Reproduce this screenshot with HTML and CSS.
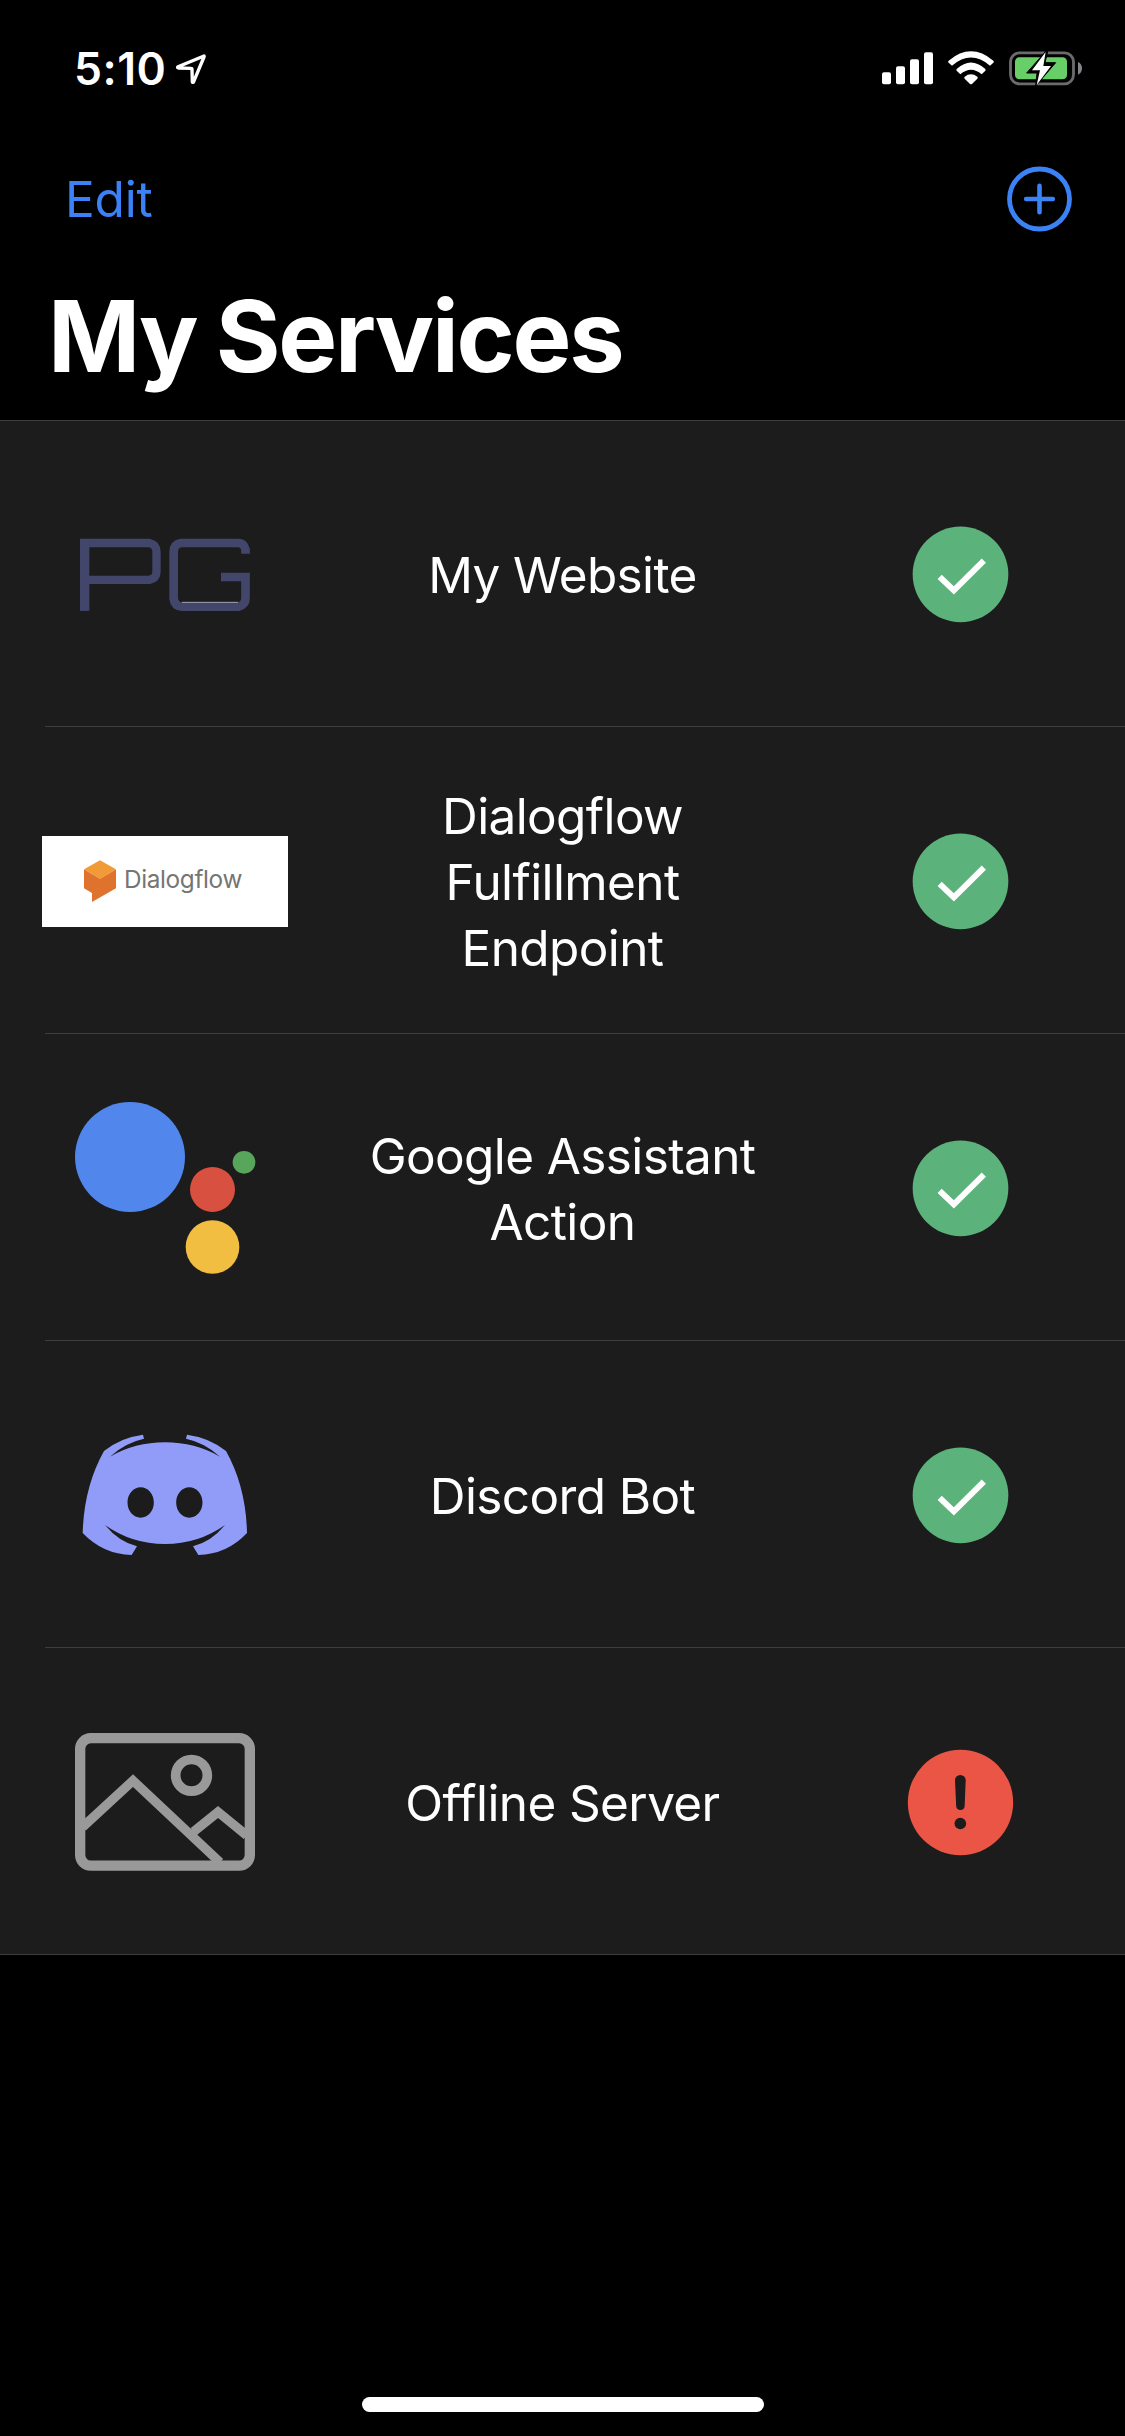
FILE: index.html
```html
<!DOCTYPE html>
<html lang="en">
<head>
<meta charset="utf-8">
<title>My Services</title>
<link rel="stylesheet" href="styles.css">
</head>
<body>
<svg class="defs" aria-hidden="true">
  <symbol id="ok" viewBox="0 0 480 441">
    <circle cx="241.500" cy="223" r="143.500" fill="#5bb27b"/>
    <path d="M179 230.500 221.500 271 311.500 182" fill="none" stroke="#fff" stroke-width="18"/>
  </symbol>
</svg>
<div class="screen">
  <header class="status-bar">
    <div class="clock">
      <span class="time">5:10</span>
      <svg class="location" width="30" height="30" viewBox="0 0 90 90"><path d="M84 6 6 38.500Q3 41 7 42L46 43Q48 43 48 46L49 84Q51 87 53 83L84 9Q85 6 84 6Z" fill="none" stroke="#fff" stroke-width="10" stroke-linejoin="round"/></svg>
    </div>
    <div class="indicators">
      <svg width="51" height="36" viewBox="0 0 153 108" fill="#fff"><rect x="0" y="67" width="27" height="36" rx="6"/><rect x="42" y="49" width="27" height="54" rx="6"/><rect x="84" y="28" width="27" height="75" rx="6"/><rect x="126" y="7" width="27" height="96" rx="6"/></svg>
      <svg width="46" height="36" viewBox="0 0 138 108" fill="#fff">
        <path d="M2 32Q-1 35 2 38L12 47Q69-2 126 47L136 38Q139 35 136 32Q69-24 2 32Z"/>
        <path d="M26 57Q24 60 26 62L37 73Q69 46 101 73L112 62Q114 60 112 57Q69 18 26 57Z"/>
        <path d="M50 80Q47 83 50 86L66 102Q69 104 72 102L88 86Q91 83 88 80Q69 66 50 80Z"/>
      </svg>
      <svg width="74" height="36" viewBox="0 0 222 108">
        <rect x="4.500" y="8.500" width="189" height="93" rx="27" fill="none" stroke="#6b6b6d" stroke-width="8.500"/>
        <path d="M207 36Q219 41 219 55T207 74Z" fill="#868688"/>
        <rect x="18" y="22" width="156" height="66" rx="13" fill="#68ce67"/>
        <path d="M112 2 53 69H84L80 108 140 38H108L116 4Z" fill="#000" stroke="#000" stroke-width="3"/>
        <path d="M110 6 69 61H93L83 105 126 48H103Z" fill="#fff"/>
      </svg>
    </div>
  </header>
  <nav class="nav-bar">
    <a class="edit">Edit</a>
    <svg width="67" height="66" viewBox="0 0 67 66" fill="none" stroke="#3b82f7"><circle cx="34.500" cy="33" r="30" stroke-width="4.800"/><path d="M34.500 19.700v26.600M21.200 33h26.600" stroke-width="4.600" stroke-linecap="round"/></svg>
  </nav>
  <h1 class="title">My Services</h1>
  <main class="services">
    <section class="service">
      <svg class="logo" width="270" height="127" viewBox="0 0 810 381" fill="none" stroke="#43466b">
        <path d="M163.500 302V99H358Q379.500 104 379.500 125V185Q379.500 205 358 209.500H177" stroke-width="25"/>
        <path d="M150 87H178V302H150Z" fill="#43466b" stroke="none"/>
        <path d="M646.500 131V118Q641 99 625 99H453Q431 103 431 125V266Q434 289 455 290H625Q646.500 285 646.500 265V201H573" stroke-width="26"/>
        <path d="M456 277H624" stroke="#a3a3ae" stroke-width="3"/>
      </svg>
      <h2 class="name">My Website</h2>
      <svg class="state" width="160" height="147"><use href="#ok"/></svg>
    </section>
    <section class="service">
      <svg class="logo" width="270" height="121" viewBox="0 0 810 363">
        <path d="M36 48H774V321H36Z" fill="#fff"/>
        <path d="M162 148 210 176 258 148V205L186 246V219L162 205Z" fill="#df732d"/>
        <path d="M210 121 258 148 210 177 162 148Z" fill="#f09b38"/>
        <text class="wordmark" x="282" y="205" textLength="355">Dialogflow</text>
      </svg>
      <h2 class="name">Dialogflow Fulfillment Endpoint</h2>
      <svg class="state" width="160" height="147"><use href="#ok"/></svg>
    </section>
    <section class="service">
      <svg class="logo" width="210" height="215" viewBox="0 0 630 645">
        <circle cx="210" cy="231" r="165" fill="#5186ed"/>
        <circle cx="457.500" cy="328.500" r="67.500" fill="#d85140"/>
        <circle cx="457.500" cy="501" r="80.500" fill="#f1be42"/>
        <circle cx="552" cy="247" r="34" fill="#58a55c"/>
      </svg>
      <h2 class="name">Google Assistant Action</h2>
      <svg class="state" width="160" height="147"><use href="#ok"/></svg>
    </section>
    <section class="service">
      <svg class="logo" width="210" height="169" viewBox="0 0 630 507">
        <path fill="#919cf8" fill-rule="evenodd" d="M249 74 252 86Q195 98 150 140Q225 97 315 97T480 140Q435 98 378 86L381 74Q449 83 498 123Q558 230 561 369Q501 433 415 435L399 409Q454 395 495 345Q415 402 315 402T135 345Q176 395 231 409L215 435Q129 433 68 369Q72 230 132 123Q181 83 249 74ZM242 232C220 232 202.500 252 202.500 277.500S220 323 242 323 281.500 303 281.500 277.500 264 232 242 232ZM388 232C366 232 348.500 252 348.500 277.500S366 323 388 323 427.500 303 427.500 277.500 410 232 388 232Z"/>
      </svg>
      <h2 class="name">Discord Bot</h2>
      <svg class="state" width="160" height="147"><use href="#ok"/></svg>
    </section>
    <section class="service">
      <svg class="logo" width="210" height="183" viewBox="0 0 630 549" fill="none" stroke="#999">
        <rect x="60.500" y="84.500" width="509" height="382.500" rx="32" stroke-width="31"/>
        <circle cx="394.500" cy="196" r="47.500" stroke-width="29"/>
        <path d="M68 351 219 212 480 457M401 365 474 306 560 376" stroke-width="28"/>
      </svg>
      <h2 class="name">Offline Server</h2>
      <svg class="state" width="160" height="143" viewBox="0 0 480 429">
        <circle cx="241.500" cy="217.500" r="158" fill="#eb5545"/>
        <path d="M225 151A16 16 0 0 1 257 151L254 228A12.800 12.800 0 0 1 228.500 228Z" fill="#1c1c1c"/>
        <circle cx="241" cy="280.500" r="17.500" fill="#1c1c1c"/>
      </svg>
    </section>
  </main>
  <footer class="home"><div class="home-indicator"></div></footer>
</div>
</body>
</html>
```
FILE: styles.css
```css
* {
  box-sizing: border-box;
}

body {
  margin: 0;
  background: #000;
  color: #fff;
  font-family: Inter, "Liberation Sans", sans-serif;
}

.defs {
  display: none;
}

.screen {
  display: flex;
  flex-direction: column;
  width: 1125px;
  height: 2436px;
}

.status-bar {
  display: flex;
  justify-content: space-between;
  height: 132px;
  padding: 50px 42px 0 74px;
}

.clock {
  display: flex;
  gap: 12px;
}

.time {
  width: 90px;
  font-size: 44.5px;
  font-weight: 600;
  letter-spacing: 0.5px;
  line-height: 38px;
  white-space: nowrap;
}

.location {
  margin-top: 4px;
}

.indicators {
  display: flex;
  gap: 15px;
}

.nav-bar {
  display: flex;
  align-items: center;
  justify-content: space-between;
  height: 133px;
  padding: 0 53px 0 65px;
}

.edit {
  color: #3b82f7;
  font-size: 49.5px;
  letter-spacing: -0.2px;
}

.title {
  height: 155px;
  margin: 0;
  padding-left: 48px;
  font-size: 99px;
  font-weight: 700;
  letter-spacing: -2.2px;
  line-height: 142px;
  word-spacing: -2px;
}

.services {
  margin-bottom: auto;
  background: #1c1c1c;
}

.service {
  display: grid;
  grid-template-columns: 330px 465px 330px;
  align-items: center;
  justify-items: center;
  height: 307px;
  background: linear-gradient(#3d3d41, #3d3d41) 45px 100% / 1080px 1px no-repeat;
}

.service:first-child {
  background:
    linear-gradient(#3d3d41, #3d3d41) 0 0 / 100% 1px no-repeat,
    linear-gradient(#3d3d41, #3d3d41) 45px 100% / 1080px 1px no-repeat;
}

.service:last-child {
  background-position: 0 100%;
  background-size: 100% 1px;
}

.name {
  width: 400px;
  margin: 0;
  padding-top: 2px;
  font-size: 49.5px;
  font-weight: 400;
  letter-spacing: -0.62px;
  line-height: 66px;
  text-align: center;
}

.wordmark {
  fill: #757575;
  font-size: 73px;
  font-weight: 400;
}

.home {
  display: flex;
  justify-content: center;
  padding-bottom: 24px;
}

.home-indicator {
  width: 402px;
  height: 15px;
  border-radius: 8px;
  background: #fff;
}
```
